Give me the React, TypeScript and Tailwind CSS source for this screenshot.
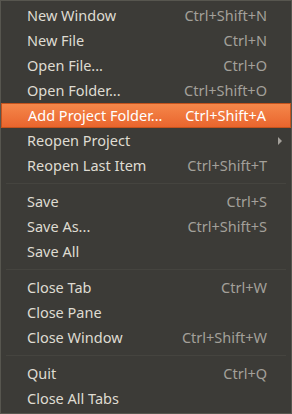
import { Fragment } from 'react'

type Item = { label: string; keys?: string; sub?: boolean; active?: boolean } | 'sep'

const ITEMS: Item[] = [
  { label: 'New Window', keys: 'Ctrl+Shift+N' },
  { label: 'New File', keys: 'Ctrl+N' },
  { label: 'Open File…', keys: 'Ctrl+O' },
  { label: 'Open Folder…', keys: 'Ctrl+Shift+O' },
  { label: 'Add Project Folder…', keys: 'Ctrl+Shift+A', active: true },
  { label: 'Reopen Project', sub: true },
  { label: 'Reopen Last Item', keys: 'Ctrl+Shift+T' },
  'sep',
  { label: 'Save', keys: 'Ctrl+S' },
  { label: 'Save As…', keys: 'Ctrl+Shift+S' },
  { label: 'Save All' },
  'sep',
  { label: 'Close Tab', keys: 'Ctrl+W' },
  { label: 'Close Pane' },
  { label: 'Close Window', keys: 'Ctrl+Shift+W' },
  'sep',
  { label: 'Quit', keys: 'Ctrl+Q' },
  { label: 'Close All Tabs' },
]

export default function App() {
  return (
    <div
      className="w-[292px] h-[414px] bg-[#3c3b37] border border-[#57564f] pt-[2px] pb-[2px] text-[14.5px] text-[#dfdbd2] select-none"
      style={{ fontFamily: '"Noto Sans", "Open Sans", sans-serif' }}
    >
      {ITEMS.map((it, i) => {
        if (it === 'sep') {
          return (
            <div key={i} className="h-[11px] flex items-center px-[5px]">
              <div className="flex-1 h-px bg-[#33322f] border-b border-[#45443f]" />
            </div>
          )
        }
        return (
          <Fragment key={i}>
            <div
              className={
                'h-[25px] flex items-center pl-[26px] pr-[24px] ' +
                (it.active
                  ? 'bg-gradient-to-b from-[#f5874a] to-[#e9652d] border border-[#c4531d] text-white pl-[25px] pr-[23px]'
                  : '')
              }
            >
              <span className="flex-1 leading-none whitespace-nowrap">{it.label.replace('…', '...')}</span>
              {it.keys && (
                <span className={'leading-none ' + (it.active ? 'text-white' : 'text-[#a3a09a]')}>{it.keys}</span>
              )}
              {it.sub && (
                <svg width="6" height="8" viewBox="0 0 6 8" className="mr-[-16px]">
                  <path d="M1 0 L5 4 L1 8 Z" fill="#a3a09a" />
                </svg>
              )}
            </div>
          </Fragment>
        )
      })}
    </div>
  )
}
